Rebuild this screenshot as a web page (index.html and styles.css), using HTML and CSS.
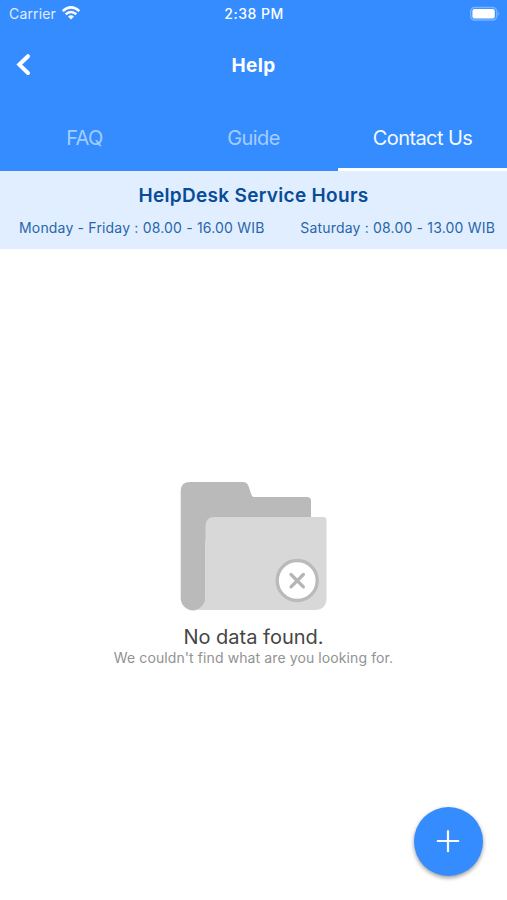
FILE: index.html
```html
<!DOCTYPE html>
<html lang="en">
<head>
<meta charset="utf-8">
<title>Help</title>
<link rel="stylesheet" href="styles.css">
</head>
<body>
<div class="screen">
  <header class="header">
    <div class="status">
      <div class="carrier"><span class="carrier-name">Carrier</span>
        <svg class="wifi" width="20" height="16" viewBox="0 0 20 16" fill="none" stroke="#fff" stroke-width="2.5"><path d="M1.7 6.2Q10-1.4 18.3 6.2M4.7 9.3Q10 4.6 15.3 9.3"/><path d="M7 11.5Q10 9.2 13 11.5L10 14.5Z" fill="#fff" stroke="none"/></svg>
      </div>
      <div class="time">2:38 PM</div>
      <svg class="battery" width="32" height="16" viewBox="0 0 32 16"><rect x="1.7" y="1.5" width="26" height="12.6" rx="4" fill="none" stroke="#78b3ff" stroke-width="1.5"/><rect x="3.4" y="3.1" width="22.4" height="9.4" rx="2" fill="#fff"/><path d="M29.4 5.6Q31.4 7.8 29.4 10Z" fill="#78b3ff"/></svg>
    </div>
    <div class="nav">
      <svg class="back" width="18" height="26" viewBox="0 0 18 26" fill="none" stroke="#fff" stroke-width="4" stroke-linecap="round"><path d="M14 4.2L5.3 12.6L14 21"/></svg>
      <h1 class="title">Help</h1>
      <span></span>
    </div>
    <nav class="tabs">
      <div class="tab"><span>FAQ</span></div>
      <div class="tab"><span>Guide</span></div>
      <div class="tab active"><span>Contact Us</span></div>
    </nav>
  </header>
  <section class="hours">
    <h2 class="hours-title">HelpDesk Service Hours</h2>
    <div class="hours-row"><span class="weekday">Monday - Friday : 08.00 - 16.00 WIB</span><span class="saturday">Saturday : 08.00 - 13.00 WIB</span></div>
  </section>
  <main class="empty">
    <svg class="folder" width="148" height="130" viewBox="0 0 148 130">
      <path d="M10 1H63Q67 1 68.5 5L71.5 14Q72.2 16 74 16H127Q131 16 131 20V60H25.5V117A12.4 12.4 0 0 1 .7 117V10Q.7 1 10 1Z" fill="#bababa"/>
      <path d="M34.5 36H143.500Q146.500 36 146.500 39V117Q146.500 129 134.500 129H13A12.500 12.500 0 0 0 25.500 116V45Q25.500 36 34.500 36Z" fill="#d8d8d8"/>
      <circle cx="117.2" cy="99.500" r="20" fill="#fff" stroke="#bababa" stroke-width="3.3"/>
      <path d="M111 93.500L123.400 105.900M123.400 93.500L111 105.900" stroke="#b5b5b5" stroke-width="3.2" stroke-linecap="round"/>
    </svg>
    <p class="empty-title">No data found.</p>
    <p class="empty-text">We couldn't find what are you looking for.</p>
  </main>
  <button class="fab" aria-label="Add"><svg width="25" height="25" viewBox="0 0 25 25" stroke="#fff" stroke-width="2.2" stroke-linecap="round"><path d="M12 2V22.200M1.800 12H22.200"/></svg></button>
</div>
</body>
</html>
```

FILE: styles.css
```css
* { box-sizing: border-box; margin: 0; padding: 0; }
body { font-family: Inter, "Liberation Sans", sans-serif; background: #fff; }
.screen { position: relative; display: flex; flex-direction: column; height: 900px; overflow: hidden; white-space: nowrap; }
.header { height: 171px; background: #358cff; color: #fff; }
.status { display: grid; grid-template-columns: 1fr auto 1fr; align-items: center; height: 28px; padding: 0 6px 0 9px; }
.carrier { display: flex; align-items: center; gap: 5px; font-size: 14px; color: #e0eeff; }
.carrier-name { margin-top: -2px; letter-spacing: .15px; }
.wifi { margin-top: -3px; }
.time { margin-top: -2px; margin-right: 2px; font-size: 14px; font-weight: 500; letter-spacing: .5px; }
.battery { justify-self: end; margin-top: -1px; }
.nav { display: grid; grid-template-columns: 1fr auto 1fr; align-items: center; height: 74px; padding: 0 14px; }
.title { font-size: 19px; font-weight: 700; letter-spacing: .3px; }
.tabs { display: grid; grid-template-columns: repeat(3, 1fr); height: 69px; }
.tab { display: flex; justify-content: center; padding-top: 23px; font-size: 20px; line-height: 26px; letter-spacing: -.6px; color: #a3ccff; }
.tab.active { color: #f4f9ff; border-bottom: 3px solid #fff; }
.hours { height: 78px; padding-top: 12px; background: #e1eeff; text-align: center; }
.hours-title { font-size: 19px; line-height: 26px; font-weight: 600; letter-spacing: .31px; color: #084c98; }
.hours-row { display: flex; justify-content: space-between; padding: 9px 12px 0 19px; font-size: 14px; line-height: 20px; letter-spacing: .18px; color: #2866ab; }
.empty { display: flex; flex-direction: column; align-items: center; padding-top: 232px; }
.empty-title { margin-top: 12px; font-size: 20px; line-height: 28px; color: #454545; }
.empty-text { margin-top: -1px; font-size: 14px; line-height: 16px; letter-spacing: .1px; color: #929292; }
.fab { position: absolute; left: 414px; top: 807px; display: grid; place-items: center; width: 69px; height: 69px; border: 0; border-radius: 50%; background: #358cff; box-shadow: 0 2px 4px rgba(0,0,0,.4); }
```
